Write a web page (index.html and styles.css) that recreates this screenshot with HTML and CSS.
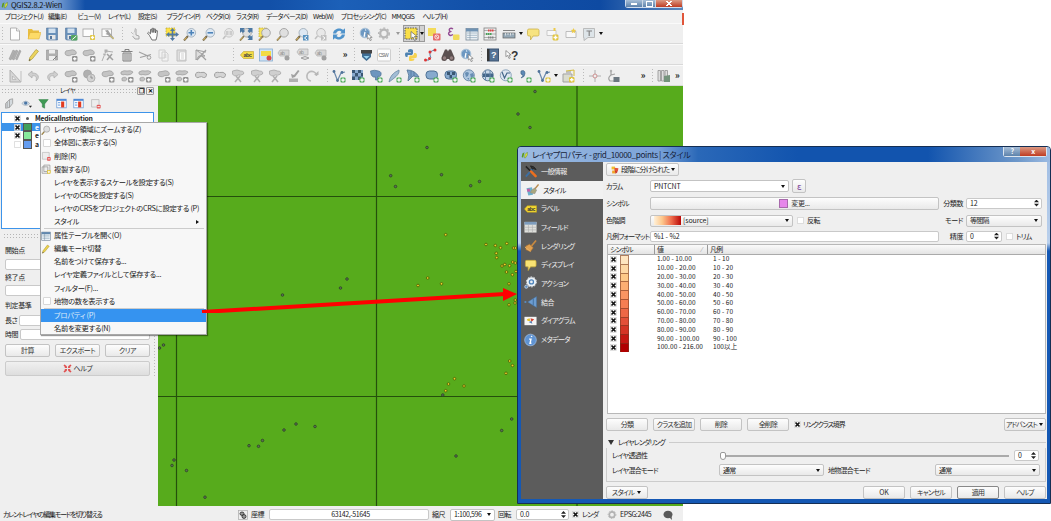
FILE: index.html
```html
<!DOCTYPE html>
<html lang="ja">
<head>
<meta charset="utf-8">
<title>QGIS2.8.2-Wien</title>
<link rel="stylesheet" href="styles.css">
</head>
<body>
<svg class="defs" aria-hidden="true">
  <defs>
    <linearGradient id="ramp"><stop offset="0" stop-color="#fff0d8"/><stop offset=".3" stop-color="#fdc88c"/><stop offset=".65" stop-color="#ee6a4a"/><stop offset="1" stop-color="#b80808"/></linearGradient>
    <symbol id="logo" viewBox="0 0 10 10"><path d="M1 8l1-5 3-2-1 4-1 4z" fill="#5a9a1e"/><path d="M5 9l1-5 3-3v4L6.500 9z" fill="#e4e63a" stroke="#4d8020" stroke-width=".6"/></symbol>
    <symbol id="plus" viewBox="0 0 6 6"><rect x=".5" y=".5" width="5" height="5" rx="1" fill="#3fa34d"/><path d="M3 1.300v3.400M1.300 3h3.400" stroke="#fff" stroke-width="1.300"/></symbol>
    <symbol id="plusy" viewBox="0 0 6 6"><rect x=".5" y=".5" width="5" height="5" rx="1" fill="#dfc02a"/><path d="M3 1.300v3.400M1.300 3h3.400" stroke="#fff" stroke-width="1.300"/></symbol>
    <symbol id="plusg" viewBox="0 0 6 6"><rect x=".5" y=".5" width="5" height="5" rx="1" fill="#888"/><path d="M3 1.500v3M1.500 3h3" stroke="#fff" stroke-width="1.200"/></symbol>
    <symbol id="del" viewBox="0 0 6 6"><rect x=".5" y=".5" width="5" height="5" rx="1" fill="#e45757"/><path d="M1.500 3h3" stroke="#fff" stroke-width="1.200"/></symbol>
    <symbol id="new" viewBox="0 0 14 14"><path d="M2.500 1h6l3 3v9h-9z" fill="#fff" stroke="#999" stroke-width=".8"/><path d="M8.500 1v3h3" fill="#eee" stroke="#999" stroke-width=".7"/></symbol>
    <symbol id="open" viewBox="0 0 14 14"><path d="M1 12V2h4l1 1.500h6V6" fill="#e9b92c"/><path d="M1 12L3 5.500h11L12 12z" fill="#ffd95a" stroke="#d9a520" stroke-width=".5"/></symbol>
    <symbol id="save" viewBox="0 0 14 14"><path d="M1.500 1h11v12h-10l-1-1z" fill="#5b87b5" stroke="#456a94" stroke-width=".6"/><rect x="3.500" y="1.500" width="7" height="4.500" fill="#cfe0ef"/><rect x="3.500" y="8" width="7" height="4.500" fill="#e6e6e6"/><rect x="5" y="9" width="2" height="3" fill="#456a94"/></symbol>
    <symbol id="saveas" viewBox="0 0 14 14"><use href="#save"/><rect x="7" y="8" width="6.500" height="5.500" rx="1" fill="#459d52"/><path d="M8.300 12.500l4-3.500" stroke="#fff"/></symbol>
    <symbol id="comp" viewBox="0 0 14 14"><rect x="1" y="2" width="10.500" height="7.500" fill="#fff" stroke="#999" stroke-width=".8"/><use href="#plusy" x="7.500" y="7.500" width="6" height="6"/></symbol>
    <symbol id="compm" viewBox="0 0 14 14"><rect x="1" y="2" width="9.500" height="7.500" fill="#fff" stroke="#999" stroke-width=".8"/><path d="M4 3.500l3-.5 1.500 2.500L13 11l-1 1.500L7 8 4.500 7 6 6z" fill="#999"/><path d="M9 8.500l4 3.500" stroke="#d6c050"/></symbol>
    <symbol id="touch" viewBox="0 0 14 14"><path d="M7.500 1L6 6.500M3 5l4 4" fill="none" stroke="#bbb"/><path d="M8 2v6l3 1v3H7L4.500 9" fill="#e9e9e9" stroke="#999" stroke-width=".9"/></symbol>
    <symbol id="hand" viewBox="0 0 14 14"><path d="M3.500 8.500L1.500 6l1-.8 2 1.600V2.500l1.200-.3.500 3.300V1.300h1.300l.3 4.200.6-3.700 1.200.3-.2 3.900.9-2.500 1.100.3L11 9l-1 4H6z" fill="#fff" stroke="#444" stroke-width=".8"/></symbol>
    <symbol id="pansel" viewBox="0 0 14 14"><rect x="1" y="1" width="9" height="8" fill="#ffe033" stroke="#b09d20" stroke-dasharray="1.500 1" stroke-width=".7"/><path d="M7.500 1l2.500 3H8.300v2.500h2.500V5L14 7.500 10.800 10V8.500H8.300V11H10l-2.500 3L5 11h1.700V8.500H4.200V10L1 7.500 4.200 5v1.500h2.500V4H5z" fill="#3f6d9b"/></symbol>
    <symbol id="lens" viewBox="0 0 14 14"><path d="M5 9l-4 4.500" stroke="#6b5b3a" stroke-width="2"/><path d="M3.500 10.500L1.500 13" stroke="#e3b84a" stroke-width="1"/><circle cx="8.300" cy="5.800" r="4.300" fill="#dce8f4" stroke="#9aa8b6" stroke-width=".9"/></symbol>
    <symbol id="lensg" viewBox="0 0 14 14"><path d="M5 9l-4 4.500" stroke="#7d6c42" stroke-width="1.800"/><path d="M3.500 10.500L1.500 13" stroke="#e3b84a" stroke-width=".8"/><circle cx="8" cy="5.800" r="4.300" fill="#dedede" stroke="#999" stroke-width=".9"/></symbol>
    <symbol id="zin" viewBox="0 0 14 14"><use href="#lens"/><path d="M8.300 3v5.600M5.500 5.800h5.600" stroke="#3c78b4" stroke-width="1.600"/></symbol>
    <symbol id="zout" viewBox="0 0 14 14"><use href="#lens"/><path d="M5.500 5.800h5.600" stroke="#3c78b4" stroke-width="1.600"/></symbol>
    <symbol id="z11" viewBox="0 0 14 14"><path d="M4.500 9l-2.500 3" stroke="#bbb" stroke-width="1.500"/><circle cx="8" cy="5.800" r="4.300" fill="#e8e8e8" stroke="#c4c4c4"/><path d="M6 4v4M10 4v4M8 4.500v1M8 6.500v1" stroke="#aaa"/></symbol>
    <symbol id="full" viewBox="0 0 14 14"><use href="#lensg"/><path d="M1 1h5L4.500 2.500l1.500 1.500-2 2-1.500-1.500L1 6zM13.500 1v5L12 4.500 10.500 6l-2-2L10 2.500 8.500 1zM13.500 13h-5l1.500-1.500L8.500 10l2-2L12 9.500l1.500-1.500z" fill="#3c6d9c"/></symbol>
    <symbol id="zsel" viewBox="0 0 14 14"><rect x="1" y="1" width="8" height="9" fill="#fbe24a" stroke="#b09d20" stroke-dasharray="1.500 1" stroke-width=".7"/><use href="#lensg"/></symbol>
    <symbol id="zlast" viewBox="0 0 14 14"><use href="#lens"/><path d="M8 8h5.500v5.500H8z" fill="#4688bd"/><path d="M12 9l-2.500 2 2.500 2" stroke="#fff" fill="none"/></symbol>
    <symbol id="znext" viewBox="0 0 14 14"><path d="M4.500 9l-2.500 3" stroke="#bbb" stroke-width="1.500"/><circle cx="8" cy="5.800" r="4.300" fill="#e8e8e8" stroke="#bbb"/><path d="M8 8h5.500v5.500H8z" fill="#bbb"/><path d="M9.500 9l2.500 2-2.500 2" stroke="#fff" fill="none"/></symbol>
    <symbol id="refresh" viewBox="0 0 14 14"><path d="M1 6.500C2 .8 9 .5 11 3l2-1.800V6.500H8l1.500-1.600C8 3 5 3.500 4.200 6.500zM13 7.500c-1 5.700-8 6-10 3.500l-2 1.800V7.500h5L4.500 9.100C6 11 9 10.500 9.800 7.500z" fill="#3f8ac8"/></symbol>
    <symbol id="cur" viewBox="0 0 8 9"><path d="M1 0v7l2-1.500L4.500 9 6 8.300 4.500 5H7z" fill="#fff" stroke="#555" stroke-width=".7"/></symbol>
    <symbol id="ident" viewBox="0 0 14 14"><circle cx="6" cy="6" r="4.800" fill="#5f8fbe" stroke="#a5bfd6"/><path d="M6.700 2.500l-.2 1M6 5L5.200 9h1" stroke="#fff" stroke-width="1.300" fill="none"/><use href="#cur" x="7.500" y="6" width="6.500" height="8"/></symbol>
    <symbol id="gear" viewBox="0 0 14 14"><circle cx="7" cy="6.500" r="3.800" fill="none" stroke="#b2b2b2" stroke-width="2.300"/><circle cx="7" cy="6.500" r="5.400" fill="none" stroke="#b2b2b2" stroke-width="1.300" stroke-dasharray="2 2"/></symbol>
    <symbol id="select" viewBox="0 0 14 14"><rect x="1" y="1" width="12" height="11" fill="#ffe13a" stroke="#444" stroke-width=".9" stroke-dasharray="1.500 1"/><use href="#cur" x="6" y="4" width="8" height="10"/></symbol>
    <symbol id="desel" viewBox="0 0 14 14"><rect x="1" y="1" width="8" height="8" fill="#f4d94a"/><rect x="6" y="6.500" width="7.500" height="7" rx="1" fill="#e35c5c"/><circle cx="9.800" cy="10" r="2" fill="none" stroke="#fff" stroke-width=".8"/><path d="M8.500 8.700l2.600 2.600" stroke="#fff" stroke-width=".8"/></symbol>
    <symbol id="eps" viewBox="0 0 14 14"><path d="M7 2C4.500 0 1.500 2.800 4.500 4.500 .5 6 3.500 10 7 7.500" fill="none" stroke="#8a3a8a" stroke-width="1.400"/><rect x="7" y="7.500" width="6.500" height="5.500" rx="1" fill="#f1d94a"/></symbol>
    <symbol id="table" viewBox="0 0 14 14"><rect x="1" y="1.500" width="12" height="11.500" fill="#eef3f7" stroke="#6b7f92" stroke-width=".8"/><path d="M1 1.500h12v3H1z" fill="#6288ad"/><path d="M2 6h10M2 8.300h10M2 10.600h10" stroke="#8fa8bd" stroke-width=".8"/><path d="M5 4v9" stroke="#6b7f92" stroke-width=".6"/></symbol>
    <symbol id="calc" viewBox="0 0 14 14"><rect x="1" y="1" width="12" height="12" fill="#eee" stroke="#777" stroke-width=".8"/><path d="M1 3.500h12M1 7h12M1 10.500h12" stroke="#777" stroke-width=".6"/><path d="M5 3.500h6" stroke="#d33" stroke-width="2" stroke-dasharray="1.500 .5"/><path d="M3 7h6" stroke="#3a9a4a" stroke-width="1.800" stroke-dasharray="1.500 .5"/><path d="M5 10.500h6" stroke="#777" stroke-width="1.800" stroke-dasharray="1.500 .5"/></symbol>
    <symbol id="measure" viewBox="0 0 14 14"><path d="M1 3.500h12" stroke="#777"/><rect x="1" y="6" width="12" height="5" fill="#8ca1b0" stroke="#555" stroke-width=".7"/><path d="M3.500 6v2.500M6 6v2M8.500 6v2.500M11 6v2" stroke="#eee" stroke-width=".8"/></symbol>
    <symbol id="tip" viewBox="0 0 14 14"><path d="M3 2h8.500q1.500 0 1.500 1.500v4Q13 9 11.500 9H7l-2.500 4V9H3Q1.500 9 1.500 7.500v-4Q1.500 2 3 2z" fill="#f8e273" stroke="#c9ac3a" stroke-width=".8"/></symbol>
    <symbol id="bm" viewBox="0 0 14 14"><path d="M2 4.500h10v6H2z" fill="#fafafa" stroke="#aaa" stroke-width=".8"/><path d="M9.500 1l.8 1.800 2 .2-1.500 1.300.5 2-1.800-1-1.800 1 .5-2L6.700 3l2-.2z" fill="#ecc83a"/></symbol>
    <symbol id="bmn" viewBox="0 0 14 14"><path d="M2 3.500h9v5H2z" fill="#fafafa" stroke="#bbb" stroke-width=".8"/><path d="M8.500 1h2v3h-2z" fill="#ecc83a"/><use href="#plusy" x="7" y="7" width="7" height="7"/></symbol>
    <symbol id="anno" viewBox="0 0 14 14"><path d="M1.500 1.500h11v9H6l-4 3v-3h-.5z" fill="#dce3e8" stroke="#aaa" stroke-width=".8"/><path d="M4.500 4h5.500M7.200 4v5" stroke="#777" stroke-width="1.200"/></symbol>
    <symbol id="pens" viewBox="0 0 14 14"><path d="M1 11l4-9 2 1-4 9zM4 11l4-9 2 1-4 9zM7.500 11l4-9 1.500 1-4 9z" fill="#aaa" stroke="#888" stroke-width=".5"/></symbol>
    <symbol id="pen" viewBox="0 0 14 14"><path d="M2 13l.8-3.500L9 1.500l2.500 1.700L5.200 11z" fill="#ecd24e" stroke="#a8922a" stroke-width=".7"/><path d="M2 13l.5-2 1.300 1z" fill="#444"/></symbol>
    <symbol id="saveg" viewBox="0 0 14 14"><path d="M1.500 2h11v10h-11z" fill="#aaa" stroke="#888" stroke-width=".6"/><path d="M4 2h6v3.500H4zM4 8h6v4H4z" fill="#eee"/><path d="M8 12l4-4" stroke="#777"/></symbol>
    <symbol id="gblob" viewBox="0 0 14 14"><path d="M1 5Q1 2 5 2.500q4-1.500 6 0 2 1.500 1 3.500-2 1-4 .5-3 2-5 1Q1 7 1 5z" fill="#c0c0c0" stroke="#999" stroke-width=".8"/><use href="#plusg" x="7.500" y="7.500" width="6.500" height="6.500"/></symbol>
    <symbol id="gblob2" viewBox="0 0 14 14"><path d="M1 3q3-2 6-1 4-1 6 1-1 2-3 2.500-3 1-5 0-2 1-4-.5zM2 9q4-2 5 1-1 3-5 1.500z" fill="#c0c0c0" stroke="#999" stroke-width=".8"/><use href="#plusg" x="7.500" y="7.500" width="6.500" height="6.500"/></symbol>
    <symbol id="gshape" viewBox="0 0 14 14"><path d="M1.500 6q0-3.500 5-2.500 4-1 6 1.500 0 4-3 3.500-2-1.500-4-.5Q2 10 1.500 6z" fill="#d2d2d2" stroke="#999"/></symbol>
    <symbol id="gcirc" viewBox="0 0 14 14"><circle cx="5.500" cy="5" r="4" fill="#aaa" stroke="#999" stroke-width=".7"/><circle cx="9" cy="9" r="4" fill="#d0d0d0" stroke="#999" stroke-width=".7"/><path d="M9 6.500V9h2" stroke="#888" fill="none"/></symbol>
    <symbol id="gnode" viewBox="0 0 14 14"><path d="M1 13L5 3l7 1M5 7l-3-1" fill="none" stroke="#aaa"/><rect x="3.500" y="1.500" width="3" height="3" fill="#aaa"/><path d="M6 6l6 6M11 6l-5 6" fill="none" stroke="#999" stroke-width="1.500"/></symbol>
    <symbol id="gcut" viewBox="0 0 14 14"><path d="M1.500 2q5-2 8 0 4 0 3 3-3 2-5 1Q3 8 1.500 5z" fill="#ccc" stroke="#999" stroke-width=".7"/><path d="M5 7l5 6M9 7l-5 6" stroke="#aaa" stroke-width="1.500"/></symbol>
    <symbol id="gstamp" viewBox="0 0 14 14"><path d="M11 1l1.500 1L8 8 5 9 4 5l3 1z" fill="#999"/><path d="M2 9.500h9V13H2z" fill="#aaa"/></symbol>
    <symbol id="trash" viewBox="0 0 14 14"><path d="M1.500 3.500h11M5 3V1.500h4V3M3 5h8v8H3z" fill="none" stroke="#777"/><path d="M5 5.500v7M7 5.500v7M9 5.500v7" stroke="#777"/></symbol>
    <symbol id="scis" viewBox="0 0 14 14"><path d="M1 4l9 4M2 9.500l11-3" stroke="#999" stroke-width="1.200"/><circle cx="11" cy="9.500" r="1.800" fill="none" stroke="#999"/></symbol>
    <symbol id="copy" viewBox="0 0 14 14"><path d="M2 2h6v8H2zM5 4h4l2 2v7H5z" fill="#f3f3f3" stroke="#ccc"/><path d="M6.500 7h3M6.500 9h3" stroke="#ccc"/></symbol>
    <symbol id="paste" viewBox="0 0 14 14"><path d="M2 2h9v11H2z" fill="#ddd" stroke="#bbb"/><path d="M4.500 4h6v8h-6z" fill="#fff" stroke="#bbb" stroke-width=".6"/><path d="M6 6h3M6 8h3M6 10h3" stroke="#bbb" stroke-width=".7"/></symbol>
    <symbol id="nodesel" viewBox="0 0 14 14"><path d="M2 2v10l3-4h6z" fill="#ddd" stroke="#999"/><path d="M2 2l10 2M3 12L12 2M7 7l5 5" stroke="#999" stroke-width="1.200"/></symbol>
    <symbol id="abc" viewBox="0 0 16 10"><path d="M4 1h11.500v8H4L.5 5z" fill="#f4d932" stroke="#b99a1c" stroke-width=".7"/><text x="4" y="7.300" font-size="6.500" font-weight="bold" font-family="Liberation Sans, sans-serif" fill="#333">abc</text></symbol>
    <symbol id="abcsel" viewBox="0 0 14 14"><rect x=".5" y="1" width="13" height="12" fill="#cde2f5" stroke="#7ba7d0" stroke-width=".8"/><path d="M2 3h10v5H2z" fill="#f4d932"/><circle cx="10" cy="10" r="2.500" fill="#d43a3a"/></symbol>
    <symbol id="abcg" viewBox="0 0 14 14"><path d="M3 2h9v6H3L1 5z" fill="#d4d4d4" stroke="#aaa" stroke-width=".7"/><text x="3" y="7" font-size="5" font-family="Liberation Sans, sans-serif" fill="#888">ab</text><circle cx="10" cy="10" r="2.500" fill="#999"/></symbol>
    <symbol id="abcg2" viewBox="0 0 14 14"><path d="M3 1h9v6H3L1 4z" fill="#d8d8d8" stroke="#aaa" stroke-width=".7"/><text x="3" y="6" font-size="5" font-family="Liberation Sans, sans-serif" fill="#888">ab</text><path d="M5 10q4-3 8 0-4 3-8 0z" fill="#ddd" stroke="#999"/></symbol>
    <symbol id="tri" viewBox="0 0 14 14"><path d="M2 1v12h11z" fill="#d4d4d4" stroke="#aaa"/><path d="M4.500 7v3.500H8z" fill="#efefef" stroke="#aaa" stroke-width=".7"/><path d="M13 2v11" stroke="#bbb"/></symbol>
    <symbol id="undo" viewBox="0 0 14 14"><path d="M5 2L1 5.500 5 9V7c4-1 5 1 4 5 4-3 3-8-4-8z" fill="#ccc" stroke="#aaa" stroke-width=".8"/></symbol>
    <symbol id="redo" viewBox="0 0 14 14"><path d="M9 2l4 3.500L9 9V7c-4-1-5 1-4 5-4-3-3-8 4-8z" fill="#ccc" stroke="#aaa" stroke-width=".8"/></symbol>
    <symbol id="rot" viewBox="0 0 14 14"><path d="M6 12A4.800 4.800 0 1 1 11.500 7" fill="none" stroke="#b5b5b5" stroke-width="1.700"/><path d="M9 6h4.500V2z" fill="#b0b0b0"/></symbol>
    <symbol id="shield" viewBox="0 0 14 14"><path d="M3 3h9v6l-4.500 4L3 9z" fill="#2e5f8a"/><path d="M2 2h11v3.500H2z" fill="#333"/><path d="M4.500 8h6l-3 3z" fill="#8fd0ef"/></symbol>
    <symbol id="csw" viewBox="0 0 14 14"><rect x=".5" y="1" width="13" height="12" rx="1" fill="#fff" stroke="#ccc"/><text x="1.500" y="8.500" font-size="5" font-family="Liberation Sans, sans-serif" fill="#555">CSW</text></symbol>
    <symbol id="py" viewBox="0 0 14 14"><path d="M4 5V2.500Q4 1 6.500 1T9 2.500V5.500L8 7H4Q3.500 7 3.500 9H2.500Q1 9 1 6.500T2.500 4.500H7V4H4z" fill="#3d77ab"/><path d="M10 6v-1h1.500Q13 5 13 7.500T11.500 10H7.500v.5h3q0 2.500-3 2.500T5 11.500V9l1-1.500h3z" fill="#f7cf3e"/></symbol>
    <symbol id="trace" viewBox="0 0 14 14"><path d="M2 12h4Q9 10 7 7q-1-4 5-5" fill="none" stroke="#4a6fa0"/><circle cx="2.500" cy="12" r="1.500" fill="#d22"/><circle cx="6.500" cy="10.500" r="1.500" fill="#d22"/><circle cx="7" cy="4" r="1.500" fill="#d22"/><circle cx="12" cy="2" r="1.500" fill="#d22"/></symbol>
    <symbol id="bino" viewBox="0 0 14 14"><path d="M4 1.500h2l1 2 1-2h2l3.500 8q.5 3.500-3 3.500-2 0-2.500-2H6q-.5 2-2.500 2Q0 13 .5 9.500z" fill="#4c4040"/><circle cx="3.500" cy="10" r="1.700" fill="#8a7474"/><circle cx="10.500" cy="10" r="1.700" fill="#8a7474"/></symbol>
    <symbol id="book" viewBox="0 0 14 14"><rect x="1.500" y="1" width="11" height="12" fill="#44658c" stroke="#2b4565"/><path d="M1 1h2.500v12H1z" fill="#222"/><text x="5" y="10" font-size="9" font-weight="bold" font-family="Liberation Sans, sans-serif" fill="#fff">?</text></symbol>
    <symbol id="what" viewBox="0 0 14 14"><use href="#cur" x="0" y="2" width="7" height="9"/><text x="6" y="12" font-size="12" font-weight="bold" font-family="Liberation Sans, sans-serif" fill="#222">?</text></symbol>
    <symbol id="vec" viewBox="0 0 14 14"><path d="M2 2.500L5.500 11.500 9 4l4-1" fill="none" stroke="#5c7fa6" stroke-width="1.200"/><circle cx="2" cy="2.500" r="1.400" fill="#3f6690"/><circle cx="10" cy="3.500" r="1.400" fill="#3f6690"/><circle cx="5.500" cy="11.500" r="1.400" fill="#3f6690"/></symbol>
    <symbol id="vadd" viewBox="0 0 14 14"><use href="#vec"/><use href="#plus" x="8" y="8" width="6" height="6"/></symbol>
    <symbol id="vnew" viewBox="0 0 14 14"><use href="#vec"/><use href="#plusy" x="8" y="8" width="6" height="6"/></symbol>
    <symbol id="radd" viewBox="0 0 14 14"><path d="M1 1h11v10H1z" fill="#7fa3cb"/><path d="M1 1h3v3H1zM7 1h3v3H7zM4 4h3v3.500H4zM10 4h2v3.500h-2zM1 7.500h3V11H1zM7 7.500h3V11H7z" fill="#274766"/><use href="#plus" x="8" y="8" width="6" height="6"/></symbol>
    <symbol id="pg" viewBox="0 0 14 14"><path d="M1.500 2q4-1.500 8 0 4 1 2 5-1.500 1-2.500 0v4H6.500V8Q2 9 1.500 2z" fill="#5f8cba" stroke="#3c638b" stroke-width=".7"/><use href="#plus" x="8" y="8" width="6" height="6"/></symbol>
    <symbol id="feather" viewBox="0 0 14 14"><path d="M1 13Q2 5 11 1q1 4-6 9z" fill="#9ab8d3" stroke="#5c7d9e" stroke-width=".8"/><use href="#plus" x="8" y="8" width="6" height="6"/></symbol>
    <symbol id="fan" viewBox="0 0 14 14"><path d="M1 1q8 0 12 7l-6-1-5 5q2-6-1-11z" fill="#6e98c3" stroke="#3c638b" stroke-width=".8"/><path d="M5 2v6M8 3v4" stroke="#3c638b" stroke-width=".7"/><use href="#plus" x="8" y="8" width="6" height="6"/></symbol>
    <symbol id="db" viewBox="0 0 14 14"><rect x="1" y="2" width="11.500" height="8" rx="3.500" fill="#7ca3cb" stroke="#3c638b"/><use href="#plus" x="8" y="8" width="6" height="6"/></symbol>
    <symbol id="dbr" viewBox="0 0 14 14"><rect x="1" y="2" width="11.500" height="8" rx="3.500" fill="#7ca3cb" stroke="#3c638b"/><path d="M3 3h3v3H3zM8 3h3v3H8zM5.500 6H8v3H5.500z" fill="#274766"/><use href="#plus" x="8" y="8" width="6" height="6"/></symbol>
    <symbol id="wms" viewBox="0 0 14 14"><circle cx="6.800" cy="6.300" r="5.500" fill="#a9c3de" stroke="#4a7097" stroke-width=".8"/><path d="M3 4q2-2 4 0l-1 3-2 1zM8 5l3-1 1 3-3 2zM5 9l2 0v2z" fill="#5a84ae"/><use href="#plus" x="8" y="8" width="6" height="6"/></symbol>
    <symbol id="wcs" viewBox="0 0 14 14"><circle cx="6.800" cy="6.300" r="5.500" fill="#c5d7e9" stroke="#2f5478" stroke-width=".8"/><path d="M2 4.500h10v3.500H2z" fill="#31587f"/><path d="M4.500 1.500v9.500M9 1.500v9.500" stroke="#5a7fa5"/><use href="#plus" x="8" y="8" width="6" height="6"/></symbol>
    <symbol id="wfs" viewBox="0 0 14 14"><circle cx="6.800" cy="6.300" r="5.500" fill="#dce7f2" stroke="#6b8bab" stroke-width=".8"/><path d="M3 3l2.500 6L8 4h3" fill="none" stroke="#31587f" stroke-width="1.200"/><use href="#plus" x="8" y="8" width="6" height="6"/></symbol>
    <symbol id="csv" viewBox="0 0 14 14"><path d="M3 2q4-1.500 4 2.500Q7 8 3 9q2-2 2-3-3 0-2-4z" fill="#4e7fb0" stroke="#2f5478" stroke-width=".6"/><use href="#plus" x="8" y="8" width="6" height="6"/></symbol>
    <symbol id="gpx" viewBox="0 0 14 14"><path d="M2 5h9v8H2z" fill="#d8dacb" stroke="#999"/><path d="M5 2h5v4H5z" fill="#bbb"/><path d="M5 2l8-1v6" stroke="#d3b72a" fill="none"/><use href="#plusy" x="7.500" y="7.500" width="6.500" height="6.500"/></symbol>
    <symbol id="cross" viewBox="0 0 14 14"><path d="M7 1v12M1 7h12" stroke="#aaa"/><circle cx="7" cy="7" r="2" fill="#efefef" stroke="#c88"/></symbol>
    <symbol id="topo" viewBox="0 0 14 14"><path d="M5 2v4q-4 3-1 6h4M5 6l4-1" fill="none" stroke="#999" stroke-width="1.200"/><circle cx="5" cy="2" r="1.200" fill="#aaa"/><rect x="7.500" y="8" width="6" height="5" fill="#5d6b75"/></symbol>
    <symbol id="books" viewBox="0 0 14 14"><path d="M1 1.500h2.500V12H1zM4.500 1.500H7V12H4.500zM8 1.500h2.500V12H8z" fill="#ddd" stroke="#888" stroke-width=".8"/><path d="M7 7l6-1v7H7z" fill="#678a70"/></symbol>
    <symbol id="layadd" viewBox="0 0 14 14"><path d="M2 7l5-5 4-1v6l-4 5-5 1z" fill="#d4dade" stroke="#999"/><path d="M7 2v10M4 5v7" stroke="#999"/></symbol>
    <symbol id="eye" viewBox="0 0 14 14"><path d="M1 7q5-6 10 0-5 5-10 0z" fill="#d4dfea" stroke="#a5b0bb"/><circle cx="6" cy="6.500" r="2.200" fill="#4a76a5"/><path d="M10 10h4l-2 2.500z" fill="#222"/></symbol>
    <symbol id="filter" viewBox="0 0 14 14"><path d="M1 2h12L8.500 7.500V13l-3-1.500v-4z" fill="#3f9a55" stroke="#2b7a3e" stroke-width=".6"/></symbol>
    <symbol id="expand" viewBox="0 0 14 14"><rect x="1" y="1.500" width="12" height="11" fill="#fff" stroke="#6a9bd8"/><path d="M1 1.500h12v2H1z" fill="#3c7cd0"/><path d="M6.500 4.500h4V12h-4z" fill="#e23b20"/><path d="M2.500 6h3M2.500 9h3" stroke="#3c7cd0"/></symbol>
    <symbol id="remove" viewBox="0 0 14 14"><path d="M2 2h9.500v9.500H2z" fill="#ededed" stroke="#bbb"/><use href="#del" x="8" y="8" width="6" height="6"/></symbol>
    <symbol id="dup" viewBox="0 0 14 14"><path d="M1.500 4h8v9h-8zM4 1.500h8.500v9H4z" fill="#eee" stroke="#888" stroke-width=".9"/><use href="#plusy" x="8" y="8" width="6" height="6"/></symbol>
    <symbol id="chk" viewBox="0 0 7 7"><rect x=".4" y=".4" width="6.200" height="6.200" fill="#fff" stroke="#ccc" stroke-width=".6"/><path d="M1.500 1.500l4 4M5.500 1.500l-4 4" stroke="#111" stroke-width="1.700"/></symbol>
    <symbol id="box" viewBox="0 0 7 7"><rect x=".4" y=".4" width="6.200" height="6.200" rx=".5" fill="#fff" stroke="#c4c4c4" stroke-width=".6"/></symbol>
    <symbol id="helpx" viewBox="0 0 10 10"><path d="M.5 1.500L2 .5l2 2V1l.5 3.500H1l1.500-.5zM9.500 1.500L8 .5l-2 2V1l-.5 3.500H9L7.500 4zM.5 8.500L2 9.500l2-2V9l.5-3.500H1l1.500.5zM9.500 8.500L8 9.500l-2-2V9l-.5-3.500H9L7.500 6z" fill="#e05050"/></symbol>
    <symbol id="tools" viewBox="0 0 14 14"><path d="M2 13L10 4" stroke="#3b6fa5" stroke-width="2"/><path d="M7 1.500q4 0 6 4l-2.500-1L9 5z" fill="#333" stroke="#222"/><path d="M2 2l6 6" stroke="#222" stroke-width="1.600"/><path d="M7.500 7.500l5 5" stroke="#ee6f1e" stroke-width="2.700" stroke-linecap="round"/></symbol>
    <symbol id="paint" viewBox="0 0 14 14"><path d="M.5 5l6-1 1 8-5 1z" fill="#6bb0cd"/><path d="M1 6l3-.5.5 3-3 .5z" fill="#c55fa7"/><path d="M13.500 1L9 6.500" stroke="#b98b4e" stroke-width="1.500"/><path d="M6 7l3-2 2.500 2-2 4-5-1z" fill="#a9a67c" stroke="#888" stroke-width=".5"/></symbol>
    <symbol id="broom" viewBox="0 0 14 14"><path d="M13 1L8 7" stroke="#c98a40" stroke-width="1.800"/><path d="M2 7l4-2 4 4-3 4-5-2z" fill="#e0a050" stroke="#a86a28" stroke-width=".6"/><path d="M1 8l6 5" stroke="#e8b46c"/></symbol>
    <symbol id="fields" viewBox="0 0 14 14"><path d="M.5 1.500h13V13H.5z" fill="#dfe0dc"/><path d="M.5 1.500h13v3H.5z" fill="#7d9cbd"/><path d="M.5 7.300h13M.5 10.100h13M4.800 4.500V13M9.100 4.500V13" stroke="#aaa" stroke-width=".6"/></symbol>
    <symbol id="action" viewBox="0 0 14 14"><circle cx="8" cy="5.800" r="4" fill="#4b82ba" stroke="#eaf0f5" stroke-width="2.200"/><circle cx="8" cy="5.800" r="5.400" fill="none" stroke="#eaf0f5" stroke-dasharray="1.800 1.600" stroke-width="1"/><circle cx="8" cy="5.800" r="1.500" fill="#eaf0f5"/><circle cx="2.500" cy="11" r="1.700" fill="#5b8cc0" stroke="#bcd"/></symbol>
    <symbol id="join" viewBox="0 0 14 14"><path d="M4 7l9.500-6v12z" fill="#6c9cd0" stroke="#416f9f" stroke-width=".5"/><circle cx="1.500" cy="7" r="1.200" fill="#5b8cc0"/><path d="M10 3.500v7" stroke="#416f9f"/></symbol>
    <symbol id="diag" viewBox="0 0 14 14"><rect x=".5" y="2.500" width="13" height="9" fill="#f4f4f4"/><path d="M3 5l3-1 1 3H4z" fill="#e8c22e"/><path d="M7 4l4 1-3 3z" fill="#d04030"/><path d="M5 8l3-1 1 3z" fill="#4a7bb5"/></symbol>
    <symbol id="meta" viewBox="0 0 14 14"><circle cx="7" cy="7" r="6.300" fill="#5f93d2" stroke="#a8c6ea" stroke-width=".7"/><path d="M8.300 2.500l-.3 1.300M5.500 6h2l-1 4.500h1.500" stroke="#fff" stroke-width="1.500" fill="none"/></symbol>
    <symbol id="grad" viewBox="0 0 14 14"><path d="M1 1h6v5H1z" fill="#f0c030"/><path d="M6 3l7 1-1 5H6z" fill="#e0523c"/><path d="M2 8l6 0v5H2z" fill="#f0a428"/><path d="M7 8l5 2-4 3.500z" fill="#c8251c"/></symbol>
    <symbol id="bubble" viewBox="0 0 10 10"><ellipse cx="5" cy="4.500" rx="4.500" ry="3.800" fill="#5a5a5a"/><path d="M6 7l3 3-.5-4z" fill="#5a5a5a"/></symbol>
    <symbol id="mouse" viewBox="0 0 10 10"><rect x=".5" y=".5" width="9" height="9" fill="#eee" stroke="#aaa" stroke-width=".7"/><ellipse cx="4" cy="3.700" rx="2" ry="1.700" fill="#999" stroke="#222" stroke-width=".8"/><ellipse cx="6" cy="6.500" rx="2" ry="1.900" fill="#999" stroke="#222" stroke-width=".8"/></symbol>
  </defs>
</svg>

<main class="desktop">
<section class="window">
  <header class="titlebar">
    <svg class="logo"><use href="#logo"/></svg><span class="title">QGIS2.8.2-Wien</span>
    <div class="winbtns"><i class="wb min"></i><i class="wb max"></i><i class="wb close"></i></div>
  </header>
  <nav class="menubar">
    <span>プロジェクト(J)</span><span>編集(E)</span><span>ビュー(V)</span><span>レイヤ(L)</span><span>設定(S)</span><span>プラグイン(P)</span><span>ベクタ(O)</span><span>ラスタ(R)</span><span>データベース(D)</span><span>Web(W)</span><span>プロセッシング(C)</span><span>MMQGIS</span><span>ヘルプ(H)</span>
  </nav>
  <div class="toolbar">
    <i class="grip first"></i>
    <svg><use href="#new"/></svg><svg><use href="#open"/></svg><svg><use href="#save"/></svg><svg><use href="#saveas"/></svg><svg><use href="#comp"/></svg><svg><use href="#compm"/></svg>
    <i class="grip"></i>
    <svg><use href="#touch"/></svg><svg><use href="#hand"/></svg><svg><use href="#pansel"/></svg><svg><use href="#zin"/></svg><svg><use href="#zout"/></svg><svg><use href="#z11"/></svg><svg><use href="#full"/></svg><svg><use href="#zsel"/></svg><svg><use href="#lensg"/></svg><svg><use href="#zlast"/></svg><svg><use href="#znext"/></svg><svg><use href="#refresh"/></svg>
    <i class="grip"></i>
    <svg><use href="#ident"/></svg><svg><use href="#gear"/></svg><i class="drop dim"></i>
    <span class="pressed"><svg><use href="#select"/></svg><i class="drop"></i></span>
    <svg><use href="#desel"/></svg><svg><use href="#eps"/></svg><svg><use href="#table"/></svg><svg><use href="#calc"/></svg><svg><use href="#measure"/></svg><i class="drop"></i>
    <svg><use href="#tip"/></svg><svg><use href="#bmn"/></svg><svg><use href="#bm"/></svg><svg><use href="#anno"/></svg><i class="drop"></i>
  </div>
  <div class="toolbar">
    <i class="grip first"></i>
    <svg><use href="#pens"/></svg><svg><use href="#pen"/></svg><svg><use href="#saveg"/></svg><svg><use href="#gblob"/></svg><svg><use href="#gblob"/></svg><svg><use href="#gnode"/></svg><svg><use href="#trash"/></svg><svg><use href="#scis"/></svg><svg><use href="#copy"/></svg><svg><use href="#paste"/></svg><svg><use href="#nodesel"/></svg>
    <i class="grip wide"></i>
    <svg><use href="#abc"/></svg><svg><use href="#abcsel"/></svg><svg><use href="#abcg"/></svg><svg><use href="#abcg2"/></svg><svg><use href="#abcg"/></svg>
    <b class="more">»</b><i class="grip short"></i>
    <svg><use href="#shield"/></svg><svg><use href="#csw"/></svg>
    <i class="grip"></i>
    <svg><use href="#py"/></svg><svg><use href="#trace"/></svg><svg><use href="#bino"/></svg><svg><use href="#ident"/></svg>
    <i class="grip"></i>
    <svg><use href="#book"/></svg><svg><use href="#what"/></svg>
  </div>
  <div class="toolbar">
    <i class="grip first"></i>
    <svg><use href="#tri"/></svg><svg><use href="#undo"/></svg><svg><use href="#redo"/></svg><svg><use href="#gblob"/></svg><svg><use href="#gcirc"/></svg><svg><use href="#gblob"/></svg><svg><use href="#gblob2"/></svg><svg><use href="#gblob2"/></svg><svg><use href="#gblob"/></svg><svg><use href="#gblob2"/></svg><svg><use href="#gshape"/></svg><svg><use href="#gshape"/></svg><svg><use href="#gcut"/></svg><svg><use href="#gcut"/></svg><svg><use href="#gcut"/></svg><svg><use href="#gstamp"/></svg><svg><use href="#rot"/></svg>
    <i class="grip"></i>
    <svg><use href="#vadd"/></svg><svg><use href="#radd"/></svg><svg><use href="#pg"/></svg><svg><use href="#feather"/></svg><svg><use href="#fan"/></svg><svg><use href="#db"/></svg><svg><use href="#dbr"/></svg><svg><use href="#wms"/></svg><svg><use href="#wcs"/></svg><svg><use href="#wfs"/></svg><svg><use href="#csv"/></svg><svg><use href="#vnew"/></svg><i class="drop"></i><svg><use href="#gpx"/></svg>
    <i class="grip"></i>
    <svg><use href="#cross"/></svg><svg><use href="#topo"/></svg>
    <b class="more far">»</b><i class="grip short"></i>
    <svg><use href="#books"/></svg><b class="more tight">»</b>
  </div>

  <div class="workspace">
    <aside class="sidebar">
      <div class="dockhead"><i class="dots"></i><span>レイヤ</span><i class="dots"></i><i class="db">❐</i><i class="db">✕</i></div>
      <div class="docktools"><svg><use href="#layadd"/></svg><svg><use href="#eye"/></svg><svg><use href="#filter"/></svg><svg><use href="#expand"/></svg><svg><use href="#expand"/></svg><svg><use href="#remove"/></svg></div>
      <div class="tree">
        <div class="node"><svg><use href="#chk"/></svg><i class="pt"></i><b>MedicalInstitution</b></div>
        <div class="node sel"><svg><use href="#chk"/></svg><i class="sw c1"></i><b>e</b></div>
        <div class="node"><svg><use href="#chk"/></svg><i class="sw c2"></i><b>e</b></div>
        <div class="node"><svg><use href="#box"/></svg><i class="sw c3"></i><b>a</b></div>
      </div>
      <i class="dots split"></i>
      <div class="form">
        <label>開始点</label><div class="inp"></div>
        <label>終了点</label><div class="inp"></div>
        <label class="crit">判定基準</label>
        <div class="frow"><span>長さ</span><div class="inp"></div></div>
        <div class="frow"><span>時間</span><div class="inp"></div></div>
        <div class="btns"><div class="btn">計算</div><div class="btn">エクスポート</div><div class="btn">クリア</div></div>
        <div class="btn help"><svg><use href="#helpx"/></svg>ヘルプ</div>
      </div>
    </aside>
    <svg class="map" viewBox="158 86 525 420">
      <rect x="158" y="86" width="525" height="420" fill="#57ab1c"/>
      <path d="M176.500 86v420M376.500 86v420M577 86v420M158 196.500h525M158 396.500h525" stroke="#25500c" stroke-width="1.200"/>
      <g class="far"><circle cx="535" cy="91.500" r="1.300"/><circle cx="518" cy="114" r="1.300"/><circle cx="530" cy="127.500" r="1.300"/><circle cx="427" cy="147.500" r="1.300"/><circle cx="390.700" cy="175.700" r="1.300"/><circle cx="395.500" cy="186.500" r="1.300"/><circle cx="441.500" cy="174.700" r="1.300"/><circle cx="479.500" cy="181.500" r="1.300"/><circle cx="470.700" cy="185.700" r="1.300"/><circle cx="347" cy="279" r="1.300"/><circle cx="340.500" cy="288" r="1.300"/><circle cx="282.500" cy="295" r="1.300"/><circle cx="442.800" cy="395" r="1.300"/><circle cx="511.700" cy="419" r="1.300"/><circle cx="501.700" cy="430.500" r="1.300"/><circle cx="456" cy="456" r="1.300"/><circle cx="296" cy="424" r="1.300"/><circle cx="315" cy="426.500" r="1.300"/><circle cx="284" cy="430" r="1.300"/><circle cx="262.500" cy="440.500" r="1.300"/><circle cx="249" cy="445.700" r="1.300"/><circle cx="258.500" cy="446.300" r="1.300"/><circle cx="174" cy="460" r="1.300"/><circle cx="172" cy="465.500" r="1.300"/><circle cx="186.500" cy="470.500" r="1.300"/><circle cx="205" cy="497.200" r="1.300"/><circle cx="163.500" cy="345" r="1.300"/><circle cx="159.500" cy="348" r="1.300"/></g>
      <g class="near"><circle cx="445.700" cy="234.700" r="1.300"/><circle cx="486" cy="244.500" r="1.300"/><circle cx="495.300" cy="245.500" r="1.300"/><circle cx="500.500" cy="247.700" r="1.300"/><circle cx="506.800" cy="243.500" r="1.300"/><circle cx="513.500" cy="248" r="1.300"/><circle cx="515.500" cy="248" r="1.300"/><circle cx="496.300" cy="253.300" r="1.300"/><circle cx="496.700" cy="257.600" r="1.300"/><circle cx="512.700" cy="262" r="1.300"/><circle cx="515.300" cy="263" r="1.300"/><circle cx="502" cy="266" r="1.300"/><circle cx="504.800" cy="264.500" r="1.300"/><circle cx="509.600" cy="265.700" r="1.300"/><circle cx="506.500" cy="272" r="1.300"/><circle cx="512.400" cy="274.700" r="1.300"/><circle cx="516" cy="271.500" r="1.300"/><circle cx="427.700" cy="278" r="1.300"/><circle cx="418" cy="285.500" r="1.300"/><circle cx="441.500" cy="283.800" r="1.300"/><circle cx="509" cy="283.800" r="1.300"/><circle cx="515.300" cy="300" r="1.300"/><circle cx="515" cy="303" r="1.300"/><circle cx="509" cy="304.800" r="1.300"/><circle cx="509.700" cy="361" r="1.300"/><circle cx="512.500" cy="365.500" r="1.300"/><circle cx="506" cy="373.300" r="1.300"/><circle cx="454.500" cy="378.700" r="1.300"/><circle cx="448.500" cy="384" r="1.300"/><circle cx="445.700" cy="390.700" r="1.300"/><circle cx="464" cy="386" r="1.300"/></g>
    </svg>
  </div>
  <footer class="status">
    <span class="msg">カレントレイヤの編集モードを切り替える</span>
    <svg class="s1"><use href="#mouse"/></svg><span class="w14">座標</span>
    <div class="field coord">63142,-51645</div>
    <span class="w14">縮尺</span><div class="combo scale"><span>1:100,596</span></div>
    <span class="w14">回転</span><div class="field spin rotf">0.0</div>
    <svg class="s2"><use href="#chk"/></svg><span class="w24">レンダ</span>
    <svg class="s1"><use href="#gear"/></svg><span class="epsg">EPSG:2445</span>
    <svg class="s1"><use href="#bubble"/></svg>
  </footer>
</section>
<i class="sliver"></i>

<div class="ctxmenu">
  <div class="mi"><svg><use href="#lensg"/></svg><span>レイヤの領域にズームする(Z)</span></div>
  <div class="mi"><svg class="cbx"><use href="#box"/></svg><span>全体図に表示する(S)</span></div>
  <div class="mi"><svg><use href="#remove"/></svg><span>削除(R)</span></div>
  <div class="mi"><svg><use href="#dup"/></svg><span>複製する(D)</span></div>
  <div class="mi"><span>レイヤを表示するスケールを設定する(S)</span></div>
  <div class="mi"><span>レイヤのCRSを設定する(S)</span></div>
  <div class="mi"><span>レイヤのCRSをプロジェクトのCRSに設定する (P)</span></div>
  <div class="mi sub"><span>スタイル</span></div>
  <hr>
  <div class="mi"><svg><use href="#table"/></svg><span>属性テーブルを開く(O)</span></div>
  <div class="mi"><svg><use href="#pen"/></svg><span>編集モード切替</span></div>
  <div class="mi"><span>名前をつけて保存する...</span></div>
  <div class="mi"><span>レイヤ定義ファイルとして保存する...</span></div>
  <div class="mi"><span>フィルター(F)...</span></div>
  <div class="mi"><svg class="cbx"><use href="#box"/></svg><span>地物の数を表示する</span></div>
  <hr>
  <div class="mi hot"><span>プロパティ (P)</span></div>
  <div class="mi"><span>名前を変更する(N)</span></div>
</div>

<svg class="arrow" viewBox="0 0 320 30"><path d="M2 30L305 12" stroke="#f00" stroke-width="4"/><path d="M303 6l14 6-14 7z" fill="#f00"/></svg>

<section class="dialog">
  <header class="dtitle">
    <svg class="logo"><use href="#logo"/></svg><span>レイヤプロパティ - grid_10000_points | スタイル</span>
    <div class="dbtns"><i>?</i><i class="x">x</i></div>
  </header>
  <div class="dbody">
    <nav class="tabs">
      <div class="tab"><svg><use href="#tools"/></svg><span>一般情報</span></div>
      <div class="tab on"><svg><use href="#paint"/></svg><span>スタイル</span></div>
      <div class="tab"><svg><use href="#abc"/></svg><span>ラベル</span></div>
      <div class="tab"><svg><use href="#fields"/></svg><span>フィールド</span></div>
      <div class="tab"><svg><use href="#broom"/></svg><span>レンダリング</span></div>
      <div class="tab"><svg><use href="#tip"/></svg><span>ディスプレイ</span></div>
      <div class="tab"><svg><use href="#action"/></svg><span>アクション</span></div>
      <div class="tab"><svg><use href="#join"/></svg><span>結合</span></div>
      <div class="tab"><svg><use href="#diag"/></svg><span>ダイアグラム</span></div>
      <div class="tab"><svg><use href="#meta"/></svg><span>メタデータ</span></div>
    </nav>
    <div class="pane">
      <div class="combo raised rend"><svg><use href="#grad"/></svg><span>段階に分けられた</span></div>
      <div class="prow p1"><label>カラム</label><div class="combo latin">PNTCNT</div><div class="btn epsb">ε</div></div>
      <div class="prow p2"><label>シンボル</label><div class="btn"><i class="pink"></i>変更...</div><span class="rl">分類数</span><div class="field spin">12</div></div>
      <div class="prow p3"><label>色階調</label><div class="combo raised latin"><svg class="rampbox"><rect width="27" height="9" fill="url(#ramp)"/></svg><span>[source]</span></div><svg class="cb"><use href="#box"/></svg><span class="inv">反転</span><span class="rl">モード</span><div class="combo raised">等間隔</div></div>
      <div class="prow p4"><label>凡例フォーマット</label><div class="field latin">%1 - %2</div><span class="rl">精度</span><div class="field spin">0</div><svg class="cb"><use href="#box"/></svg><span>トリム</span></div>
      <div class="table">
        <div class="thead"><span>シンボル</span><span>値<i>⁄</i></span><span>凡例</span></div>
        <div class="tr"><svg><use href="#chk"/></svg><i class="k0"></i><span>1.00 - 10.00</span><span>1 - 10</span></div>
        <div class="tr"><svg><use href="#chk"/></svg><i class="k1"></i><span>10.00 - 20.00</span><span>10 - 20</span></div>
        <div class="tr"><svg><use href="#chk"/></svg><i class="k2"></i><span>20.00 - 30.00</span><span>20 - 30</span></div>
        <div class="tr"><svg><use href="#chk"/></svg><i class="k3"></i><span>30.00 - 40.00</span><span>30 - 40</span></div>
        <div class="tr"><svg><use href="#chk"/></svg><i class="k4"></i><span>40.00 - 50.00</span><span>40 - 50</span></div>
        <div class="tr"><svg><use href="#chk"/></svg><i class="k5"></i><span>50.00 - 60.00</span><span>50 - 60</span></div>
        <div class="tr"><svg><use href="#chk"/></svg><i class="k6"></i><span>60.00 - 70.00</span><span>60 - 70</span></div>
        <div class="tr"><svg><use href="#chk"/></svg><i class="k7"></i><span>70.00 - 80.00</span><span>70 - 80</span></div>
        <div class="tr"><svg><use href="#chk"/></svg><i class="k8"></i><span>80.00 - 90.00</span><span>80 - 90</span></div>
        <div class="tr"><svg><use href="#chk"/></svg><i class="k9"></i><span>90.00 - 100.00</span><span>90 - 100</span></div>
        <div class="tr"><svg><use href="#chk"/></svg><i class="k10"></i><span>100.00 - 216.00</span><span>100以上</span></div>
      </div>
      <div class="brow"><div class="btn">分類</div><div class="btn">クラスを追加</div><div class="btn">削除</div><div class="btn">全削除</div><svg class="cb"><use href="#chk"/></svg><span>リンククラス境界</span><div class="btn end menu">アドバンスト<i class="drop"></i></div></div>
      <div class="ghead"><i></i><span>レイヤレンダリング</span><hr></div>
      <div class="group">
        <div class="grow1"><label>レイヤ透過性</label><div class="slider"><i></i></div><div class="field spin">0</div></div>
        <div class="grow2"><label>レイヤ混合モード</label><div class="combo raised">通常</div><span>地物混合モード</span><div class="combo raised">通常</div></div>
      </div>
      <div class="brow bottom"><div class="btn menu">スタイル<i class="drop"></i></div><div class="btn end latin">OK</div><div class="btn">キャンセル</div><div class="btn default">適用</div><div class="btn">ヘルプ</div></div>
    </div>
  </div>
</section>
</main>
</body>
</html>
```

FILE: styles.css
```css
* { box-sizing: border-box; }
body {
  margin: 0;
  background: #fff;
  font: 7px/1 "Noto Sans CJK JP", sans-serif;
  font-feature-settings: "palt";
  letter-spacing: -0.75px;
  color: #222;
  white-space: nowrap;
  overflow: hidden;
}
i { font-style: normal; }
svg { display: block; flex: none; }
.defs { position: absolute; width: 0; height: 0; }
.desktop { position: relative; width: 1051px; height: 521px; overflow: hidden; }
.latin { letter-spacing: -0.1px; }

/* Main window */
.window { width: 683px; height: 521px; background: #efefef; display: flex; flex-direction: column; }
.titlebar {
  height: 10px; flex: none; display: flex; align-items: center; padding-left: 1px;
  background: linear-gradient(90deg, #7da3d6 0, #7da3d6 55px, #1250a8 85px, #1250a8 270px, #1c60b8 340px, #1250a8 480px, #0e4aa2 600px, #5e88bb 683px);
}
.logo { width: 7px; height: 8px; }
.title { font-size: 7.5px; letter-spacing: -0.2px; margin-left: 3px; color: #111; }
.winbtns { margin-left: auto; display: flex; height: 8px; align-self: flex-start; border: 1px solid #d0dced; border-top: 0; border-radius: 0 0 3px 3px; }
.wb { width: 17px; background: linear-gradient(#a8bfd8, #5d82ab); border-right: 1px solid #ccd8e6; display: flex; align-items: center; justify-content: center; }
.wb.min::before { content: ""; width: 6px; height: 2px; background: #fff; }
.wb.max { width: 13px; }
.wb.max::before { content: ""; width: 5px; height: 4px; border: 1px solid #fff; }
.wb.close { width: 26px; background: linear-gradient(#dc9a84, #bf3c22); border: 0; }
.wb.close::before { content: ""; width: 6px; height: 5px; background: linear-gradient(40deg, transparent 40%, #fff 40% 60%, transparent 60%), linear-gradient(-40deg, transparent 40%, #fff 40% 60%, transparent 60%); }
.menubar { height: 13px; flex: none; display: grid; align-items: center; padding-left: 5px; background: #f1f1f1; font-size: 6.8px; letter-spacing: -0.7px;
  grid-template-columns: 43px 29.5px 30.5px 30px 28.5px 39.5px 30px 30px 47px 28px 50.5px 31px 40px; }
.toolbar { height: 21px; flex: none; display: flex; align-items: center; border-bottom: 1px solid #d9d9d9; border-top: 1px solid #fafafa; }
.toolbar svg { width: 14px; height: 14px; margin: 0 2.3px; opacity: 0.9; }
.grip { width: 8px; height: 15px; flex: none; background: radial-gradient(circle, #bbb 0.6px, transparent 0.9px) 1px 0 / 3px 3px repeat; background-clip: content-box; padding: 0 2px 0 3px; }
.grip.first { width: 5.7px; padding: 0 1px 0 2px; }
.grip.wide { width: 27.4px; padding-left: 23px; }
.grip.short { width: 5px; padding: 0 1px; }
.drop { width: 6px; flex: none; display: flex; justify-content: center; }
.drop::before { content: ""; border: 2.3px solid transparent; border-top: 3px solid #111; border-bottom: 0; }
.drop.dim { width: 9px; }
.drop.dim::before { border-top-color: #999; }
.toolbar .pressed { display: flex; align-items: center; height: 17px; width: 22.5px; flex: none; border: 1px solid #999; background: #d2d2d2; }
.toolbar .pressed svg { margin: 0 0.5px; }
.pressed .drop { border-left: 1px solid #999; height: 100%; align-items: center; }
.more { width: 21px; text-align: center; font-size: 9px; font-weight: 700; padding-left: 8px; letter-spacing: 0; }
.more.far { width: 27px; padding-left: 14px; }
.more.tight { width: 8px; padding: 0; }

.workspace { flex: 1; min-height: 0; display: flex; }
.sidebar { width: 158px; display: flex; flex-direction: column; padding: 0 2px 0 1px; }
.dots { background: radial-gradient(circle, #b5b5b5 0.6px, transparent 0.9px) 0 0 / 3px 3px; height: 6px; }
.dots.split { height: 6px; margin: 4px 5px 0 2px; }
.dockhead { height: 9px; display: grid; grid-template-columns: 58px 13px 1fr 8px 8px; align-items: center; column-gap: 1px; padding-right: 2px; font-size: 6.5px; }
.db { width: 8px; height: 8px; border: 1px solid #999; font-size: 6px; line-height: 6px; text-align: center; border-radius: 1px; color: #000; font-weight: bold; letter-spacing: 0; }
.docktools { height: 17px; display: flex; align-items: center; gap: 6.2px; padding-left: 3px; }
.docktools svg { width: 11px; height: 11px; }
.tree { height: 117px; width: 153px; border: 1px solid #3d94ea; background: #fff; padding-top: 1px; }
.node { height: 8.7px; display: flex; align-items: center; padding-left: 12px; font-size: 6.8px; letter-spacing: -0.2px; }
.node svg { width: 7px; height: 7px; }
.node.sel { background: #3d94ea; color: #fff; }
.sw { width: 9px; height: 8.7px; margin: 0 3px 0 2px; border: 1px solid #555; }
.pt { width: 3px; height: 3px; border-radius: 50%; background: #555; margin: 0 6px 0 5px; }
.c1 { background: #41a05a; } .c2 { background: #87e89c; } .c3 { background: #659df0; }
.form { padding: 8px 6px 0 4px; display: flex; flex-direction: column; letter-spacing: -0.4px; background: radial-gradient(circle, #bbb 0.6px, transparent 0.9px) right top / 3px 3px repeat-y; }
.form label { height: 11.5px; line-height: 7px; }
.inp { height: 11px; border: 1px solid #c9c9c9; border-radius: 2px; background: #fff; flex: 1; }
.form > .inp { flex: none; margin-bottom: 4px; }
.form .crit { margin-top: 1.5px; }
.frow { display: flex; align-items: center; gap: 2px; height: 14px; }
.btns { display: grid; grid-template-columns: repeat(3, 1fr); gap: 5px; margin: 3px 0 4px; }
.btn {
  height: 13px; display: flex; align-items: center; justify-content: center;
  border: 1px solid #c3c3c3; border-radius: 2px; background: linear-gradient(#fdfdfd, #e9e9e9); color: #333;
}
.btn.help { height: 15px; gap: 2px; border-color: #ccc; background: linear-gradient(#f0f0f0, #dedede); }
.btn.help svg { width: 9px; height: 9px; }
.map { width: 525px; height: 420px; }
.map .far { fill: #5c6f54; stroke: #2d4427; stroke-width: 0.8px; }
.map .near { fill: #f0d428; stroke: #4c5a08; stroke-width: 0.8px; }

.status { height: 13px; flex: none; display: flex; align-items: center; gap: 3px; padding-left: 3px; letter-spacing: -0.4px; }
.msg { width: 232px; letter-spacing: -1.2px; }
.s1 { width: 10px; height: 10px; }
.s2 { width: 7px; height: 7px; }
.w14 { width: 15px; }
.w24 { width: 22px; letter-spacing: -0.9px; }
.epsg { width: 40px; }
.field { background: #fff; border: 1px solid #c9c9c9; border-radius: 2px; height: 11px; display: flex; align-items: center; padding-left: 3px; }
.coord { width: 160px; justify-content: center; }
.spin { justify-content: space-between; letter-spacing: -0.2px; }
.spin::after { content: ""; width: 5px; height: 7px; margin-right: 2px; background: #222; clip-path: polygon(50% 0, 100% 40%, 0 40%, 0 60%, 100% 60%, 50% 100%, 0 60%, 0 40%); }
.rotf { width: 53px; }
.combo { height: 12px; border: 1px solid #c3c3c3; border-radius: 2px; background: #fff; display: flex; align-items: center; padding-left: 3px; }
.combo::after { content: ""; margin: 0 3px 0 auto; border: 2.3px solid transparent; border-top: 3px solid #111; border-bottom: 0; }
.combo.raised { background: linear-gradient(#fdfdfd, #e9e9e9); }
.scale { width: 45px; }
.sliver { position: absolute; left: 682px; top: 13px; width: 2px; height: 12px; background: #e0553a; }

/* Context menu, floating over the layer tree */
.ctxmenu { position: absolute; left: 40px; top: 122px; width: 167px; height: 213px; background: #f7f7f7; border: 1px solid #a8a8a8; box-shadow: 1px 1px 1px #0006; padding-top: 0.5px; font-size: 7.3px; letter-spacing: -0.27px; }
.mi { height: 13.1px; display: grid; grid-template-columns: 13px 1fr; align-items: center; }
.mi svg { width: 10px; height: 10px; margin-left: 0; }
.mi .cbx { width: 8px; height: 8px; margin-left: 2px; }
.mi span { grid-column: 2; }
.mi.sub { grid-template-columns: 13px 1fr 10px; }
.mi.sub::after { content: ""; border: 2px solid transparent; border-left: 3px solid #111; border-right: 0; width: 0; }
.ctxmenu hr { margin: 0 2px 0 3px; border: 0; border-top: 1px solid #ccc; height: 1px; }
.mi.hot { background: #3593f0; color: #dcebfa; }
.arrow { position: absolute; left: 200px; top: 281px; width: 320px; height: 32px; }

/* Layer properties dialog */
.dialog {
  position: absolute; left: 517px; top: 146px; width: 534px; height: 358px; display: flex; flex-direction: column;
  border: 1px solid #152f54; border-radius: 4px 4px 0 0; padding: 0 3px 4px;
  background: linear-gradient(#9dbbe2 0, #bad0ec 96px, #1458b4 104px, #1458b4 100%);
}
.dtitle { height: 15px; flex: none; margin: 0 -3px; padding: 0 3px; border-radius: 3px 3px 0 0; display: flex; align-items: center; font-size: 8.2px; letter-spacing: -0.37px; color: #17233a;
  background: linear-gradient(90deg, #9dbbe2, #7ba3d8 140px, #2a68b8 180px, #1254ae 280px, #1254ae 410px, #6e98ca 500px, #9dbbe2); }
.dtitle .logo { margin-right: 4px; }
.dbtns { margin-left: auto; display: flex; align-self: flex-start; height: 10px; border: 1px solid #dce5ef; border-top: 0; border-radius: 0 0 3px 3px; color: #fff; font-weight: bold; font-size: 7px; line-height: 8px; }
.dbtns i { width: 16px; text-align: center; background: linear-gradient(#a8bfd8, #5d82ab); }
.dbtns .x { width: 26px; background: linear-gradient(#dc9a84, #bf3c22); }
.dbody { flex: 1; min-height: 0; display: grid; grid-template-columns: 82px 1fr; background: #efefef; }
.tabs { background: #5c5c5c; color: #efefef; letter-spacing: -0.6px; }
.tab { height: 18.7px; display: flex; align-items: center; gap: 4px; padding-left: 3px; }
.tab svg { width: 13px; height: 14px; }
.tab.on { background: #f1f1f1; color: #222; padding-left: 5px; }
.pane { padding: 1px 2px 0 3px; display: flex; flex-direction: column; }
.rend { width: 73px; height: 13px; padding-left: 4px; gap: 2px; }
.rend svg { width: 8px; height: 8px; }
.prow { display: grid; align-items: center; }
.prow .field { height: 11px; }
.prow .rl { text-align: right; padding-right: 3px; letter-spacing: -0.4px; }
.cb { width: 7px; height: 7px; }
.p1 { grid-template-columns: 44px 139px 14px; height: 16px; margin-top: 2px; }
.p1 .epsb { height: 14px; margin-left: 3px; width: 14px; color: #7b3f98; font-size: 9px; }
.p2 { grid-template-columns: 44px 289px 27px 76px; height: 18px; }
.p2 .btn { gap: 3px; letter-spacing: -0.3px; }
.pink { width: 9px; height: 9px; background: #e687ea; border: 1px solid #a86aac; }
.p3 { grid-template-columns: 44px 143px 4px 10px 132px 27px 76px; height: 17px; }
.p3 .cb { grid-column: 4; }
.inv { letter-spacing: -0.4px; }
.rampbox { width: 27px; height: 9px; margin-right: 2px; }
.p4 { grid-template-columns: 44px 289px 27px 36px 4px 10px 28px; height: 14px; }
.p4 .cb { grid-column: 6; }
.table { height: 170px; margin-top: 1px; border: 1px solid #b8b8b8; background: #fff; margin-left: 1px; }
.thead { height: 10px; display: grid; grid-template-columns: 47px 53px 1fr; background: linear-gradient(#fafafa, #e4e4e4); border-bottom: 1px solid #aaa; line-height: 9px; }
.thead span { padding-left: 2px; border-right: 1px solid #999; }
.thead span:last-child { border: 0; }
.thead i { float: right; color: #aaa; padding-right: 5px; }
.tr { height: 8.8px; display: grid; grid-template-columns: 12px 9px 28px 56px 1fr; align-items: center; letter-spacing: 0.08px; font-size: 6.5px; }
.tr svg { width: 7px; height: 7px; margin-left: 2px; }
.tr i { height: 8.8px; border: 1px solid #7a3a2299; border-bottom: 0; }
.tr span { grid-row: 1; line-height: 7px; padding-bottom: 1px; }
.tr span:nth-of-type(1) { grid-column: 4; }
.tr span:nth-of-type(2) { grid-column: 5; }
.k0 { background: #fee5c0; } .k1 { background: #fdd7a4; } .k2 { background: #fdc888; } .k3 { background: #fcae72; }
.k4 { background: #fb9462; } .k5 { background: #f67d52; } .k6 { background: #ee6846; } .k7 { background: #e35038; }
.k8 { background: #d43525; } .k9 { background: #c41812; } .k10 { background: #b00000; }
.brow { display: flex; align-items: center; height: 13px; gap: 5px; margin-top: 4px; }
.brow .btn { width: 42px; }
.brow > span { letter-spacing: -1.1px; }
.brow .end { margin-left: auto; }
.brow .cb { margin: 0 -3px 0 0; }
.brow .menu { gap: 2px; }
.brow .end.menu { letter-spacing: -1px; gap: 1px; }
.btn.default { border-color: #888; }
.ghead { display: flex; align-items: center; gap: 4px; height: 13px; margin-top: 5px; padding-left: 2px; letter-spacing: -1px; }
.ghead i { border: 3px solid transparent; border-top: 5px solid #333; border-bottom: 0; }
.ghead hr { flex: 1; border: 0; border-top: 1px solid #ccc; }
.group { border: 1px solid #ccc; border-top: 0; height: 34px; margin-top: -1px; padding: 0 5px; }
.grow1 { display: grid; grid-template-columns: 108px 289px 5px 25px; height: 15px; align-items: center; }
.grow1 .field { grid-column: 4; }
.slider { height: 2px; background: #aaa; display: flex; align-items: center; }
.slider i { width: 6px; height: 8px; background: #fff; border: 1px solid #999; border-radius: 2px 2px 3px 3px; }
.grow2 { display: grid; grid-template-columns: 107px 105px 4px 107px 105px; height: 14px; align-items: center; }
.grow2 span { grid-column: 4; }
```
